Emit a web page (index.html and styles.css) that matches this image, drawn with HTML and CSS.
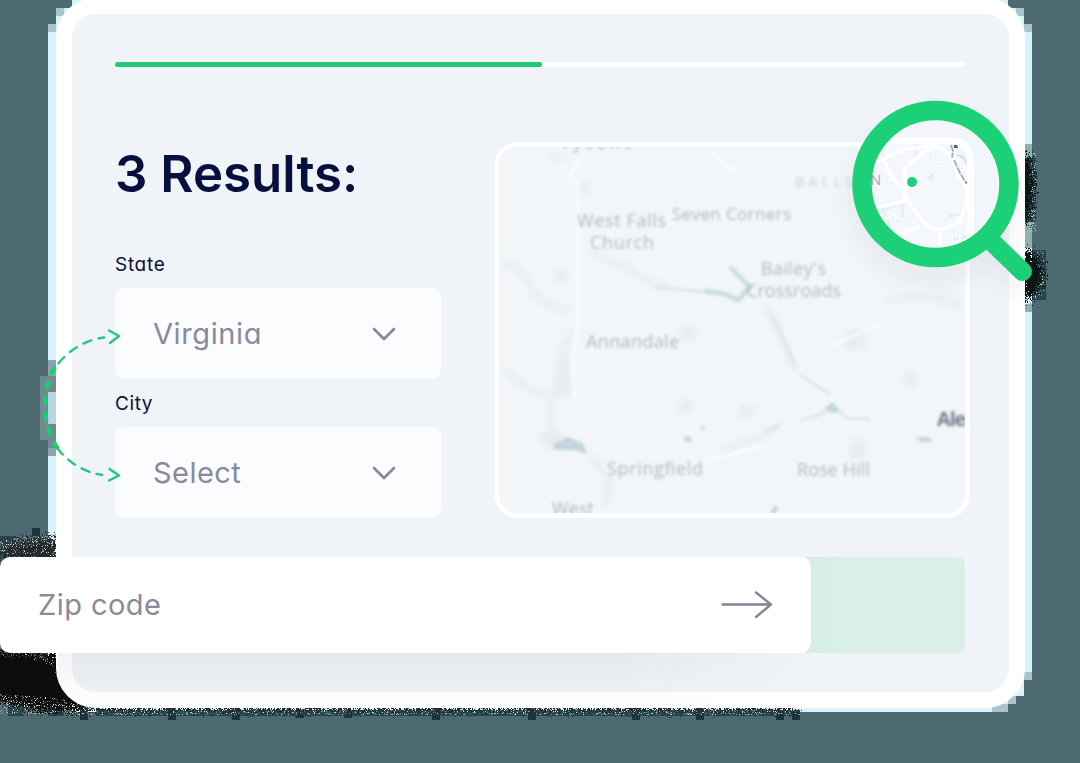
FILE: index.html
```html
<!DOCTYPE html>
<html lang="en">
<head>
<meta charset="utf-8">
<title>Results</title>
<link rel="stylesheet" href="styles.css">
</head>
<body>
<svg class="backdrop" viewBox="0 0 1080 763" aria-hidden="true">
  <defs>
    <filter id="grain" x="-20%" y="-20%" width="140%" height="140%">
      <feTurbulence type="fractalNoise" baseFrequency=".8" numOctaves="2" seed="4"/>
      <feDisplacementMap in="SourceGraphic" scale="26" xChannelSelector="R" yChannelSelector="G"/>
    </filter>
    <filter id="speckle" x="0" y="0" width="100%" height="100%">
      <feTurbulence type="fractalNoise" baseFrequency=".9" numOctaves="2" seed="9"/>
      <feColorMatrix values="0 0 0 0 .68  0 0 0 0 .74  0 0 0 0 .70  9 0 0 0 -5.400"/>
      <feComposite in2="SourceGraphic" operator="in"/>
    </filter>
  </defs>
  <path fill="#d7f3fd" d="M48 32h8V16h8V8h8V0h936v8h8v8h8v16h8v648h-8v16h-8v8h-8v8H72v-16H56v-20h-8z"/>
  <path fill="#a9c4cd" d="M48 24h8v8h-8zM56 8h8v8h-8zM1024 24h8v8h-8zM1016 8h8v8h-8zM1024 672h8v8h-8zM1008 696h8v8h-8zM992 704h16v8h-16z"/>
  <path fill="#8ba3ab" d="M48 360h8v96h-8z"/>
  <path fill="#6f8a91" d="M40 376h8v64h-8zM48 376h8v16h-8zM48 424h8v24h-8z"/>
  <path fill="#b9d5df" d="M48 392h8v32h-8z"/>
  <path fill="#264650" d="M0 536h16v8H0zM8 704h16v12H8zM48 704h16v12H48zM96 710h704v6H96zM1024 158h12v64h-12zM1032 250h14v50h-14z"/>
  <path fill="#8fb0b5" d="M1024 144h8v14h-8zM1024 222h8v26h-8zM1024 304h8v8h-8z"/>
  <path fill="#1d343c" d="M32 528h8v8h-8zM80 704h8v16h-8zM168 704h8v16h-8zM232 704h8v16h-8zM296 710h8v8h-8zM344 710h8v8h-8zM432 704h8v16h-8zM528 704h8v16h-8zM632 704h8v16h-8zM696 704h8v16h-8zM776 712h8v8h-8zM792 712h8v8h-8z"/>
  <g filter="url(#grain)">
    <path fill="#222c2d" d="M0 543 20 540 56 536V560H0z"/>
    <path fill="#0c1111" d="M-20 652H58V660L66 682 90 706V712H40L0 702H-20z"/>
    <path fill="#222a2b" d="M76 706H798V711H76z"/>
    <path fill="#0d1212" d="M1020 150Q1036 160 1034 190T1020 230z"/>
    <path fill="#0d1212" d="M1020 248Q1044 256 1044 275T1020 303z"/>
  </g>
  <g filter="url(#speckle)">
    <path d="M0 540 56 534V554H0zM0 694 60 698 84 708V714H0zM22 654h32v12l-20-6zM78 707H800V715H78zM1030 152h6v80h-8zM1036 250h8v44l-18 12 14-24z"/>
  </g>
</svg>

<main class="panel">
  <div class="progress"><div class="progress-fill"></div></div>
  <div class="columns">
    <section class="filters">
      <h1 class="title">3 Results:</h1>
      <div class="label label-state">State</div>
      <div class="select">
        <span class="value value-state">Virginia</span>
        <svg class="chevron" viewBox="0 0 24 14"><path d="M2 2 12 12 22 2"/></svg>
      </div>
      <div class="label label-city">City</div>
      <div class="select">
        <span class="value value-city">Select</span>
        <svg class="chevron" viewBox="0 0 24 14"><path d="M2 2 12 12 22 2"/></svg>
      </div>
    </section>
    <svg class="map" viewBox="495 142 475 376">
      <defs>
        <filter id="soft" x="-10%" y="-10%" width="120%" height="120%"><feGaussianBlur stdDeviation="1.400"/></filter>
        <filter id="haze" x="-20%" y="-20%" width="140%" height="140%"><feGaussianBlur stdDeviation="3.500"/></filter>
        <clipPath id="mapClip"><rect x="499" y="147" width="466" height="366" rx="17"/></clipPath>
      </defs>
      <rect x="497" y="144.500" width="470.500" height="371" rx="20" fill="#f2f6f9" stroke="#fff" stroke-width="4.500"/>
      <g clip-path="url(#mapClip)">
        <g class="terrain" filter="url(#haze)">
          <path d="M500 262 520 268 532 290 550 306 572 310M590 254 625 266 645 280 670 288M574 330 562 352 556 390 549 412 552 438M505 370 530 390 550 396M590 456 610 480 606 505M765 305 778 330 795 370M720 452 760 437 780 425M885 300 930 297 964 306"/>
          <path class="fill" d="M566 345 574 395H555zM680 326h16v14h-16zM536 435l20-6 10 10-16 12zM575 185l18-5 -8 16zM845 330h20v20h-20zM740 405h14v12h-14zM905 370h10v18h-10zM680 400h12v14h-12zM555 270h12v12h-12zM570 160h-20v-8zM850 440h16v20h-16z"/>
        </g>
        <g class="creeks" filter="url(#soft)">
          <path d="M772 315 782 336 795 366M800 375 830 394M765 432 780 425M800 420 815 416 830 410M836 408 846 418 870 419M655 287 704 292"/>
        </g>
        <g class="roads" filter="url(#soft)">
          <path d="M578 325V185L570 175 588 148M710 152 735 172M575 398Q570 360 578 325M700 463 760 446M880 324 830 346" stroke-width="3"/>
          <path d="M578 398Q600 440 660 458M830 346 790 378 700 425 680 440M790 430 870 422 964 446" stroke-width="2" opacity=".5"/>
        </g>
        <g class="water" filter="url(#soft)">
          <path d="M704 291 725 294 738 300 750 287 740 277 730 267" stroke-width="5"/>
          <path class="pond" d="M553 444 568 437 583 443 587 454 575 450 555 450zM824 408 833 402 840 412 832 413zM683 437l7 -1 2 6h-6zM700 425l5 2-3 4zM915 437l14 0 4 5-12 0z"/>
          <path fill="#c9ced3" stroke="none" d="M770 513l5-8 3 2-3 8z"/>
        </g>
        <g class="places" filter="url(#soft)">
          <text x="560" y="149" textLength="72">Tysons</text>
          <text x="577" y="227" textLength="89">West Falls</text>
          <text x="590" y="249" textLength="64">Church</text>
          <text x="672" y="220" textLength="119" font-size="17">Seven Corners</text>
          <text class="faint" x="795" y="187" textLength="58">BALLS</text>
          <text x="761" y="275" textLength="65">Bailey's</text>
          <text x="746" y="297" textLength="95">Crossroads</text>
          <text x="586" y="348" textLength="93">Annandale</text>
          <text x="607" y="475" textLength="96">Springfield</text>
          <text x="797" y="476" textLength="73">Rose Hill</text>
          <text x="552" y="515" textLength="42">West</text>
          <text class="city" x="937" y="426" textLength="98">Alexandria</text>
        </g>
      </g>
    </svg>
  </div>
  <div class="zip-row">
    <div class="zip">
      <span class="value value-zip">Zip code</span>
      <svg class="arrow" viewBox="0 0 52 28"><path d="M1.500 13.500H50M35 1.500 50 13.500 35 26"/></svg>
    </div>
    <div class="submit"></div>
  </div>
</main>

<svg class="link" viewBox="38 325 90 160" aria-hidden="true">
  <path d="M104 337.500C85 340 69 350 58 364" stroke-dasharray="8.500 7.500" stroke-dashoffset="3"/>
  <path d="M102 475C84 472 69 463 58 449" stroke-dasharray="8.500 7.500" stroke-dashoffset="3"/>
  <path d="M55 367C48 379 45 391 45 405S49 435 58 449" stroke="#17d070" stroke-width="4" stroke-linecap="butt" stroke-dasharray="9 6.500"/>
  <path d="M109 330.500 119 336 110 343M109.500 469 119 475.500 109 480.500"/>
</svg>

<svg class="lens" viewBox="832 80 220 240" aria-hidden="true">
  <defs>
    <clipPath id="lensClip"><circle cx="935" cy="184" r="66"/></clipPath>
    <clipPath id="zoomMap"><path d="M860 144H951Q967 144 967 162V260H860z"/></clipPath>
    <filter id="drop" x="-30%" y="-30%" width="160%" height="170%"><feGaussianBlur stdDeviation="12"/></filter>
    <clipPath id="onPanel"><path d="M832 80H1025V320H832z"/></clipPath>
  </defs>
  <g clip-path="url(#onPanel)">
    <g filter="url(#drop)" opacity=".07" fill="none" stroke="#27333b">
      <circle cx="935" cy="200" r="74" stroke-width="20"/>
      <path d="M990 250 1023 285" stroke-width="20" stroke-linecap="round"/>
    </g>
  </g>
  <g clip-path="url(#lensClip)">
    <path fill="#f2f5fa" d="M860 110h150v150H860z"/>
    <path fill="#fff" d="M860 137H948Q974 137 974 164V260H860z"/>
    <g clip-path="url(#zoomMap)">
      <path fill="#f4f7fb" d="M860 144H967V260H860z"/>
      <g fill="none" stroke="#e8edf1" stroke-width="2.600">
        <path d="M880 159 905 152 911 161 892 167M892 149 902 176M914 145 917 158M933 146V162H944M870 214 905 203M875 224 902 211M891 205 898 230M882 208 895 238M895 218 916 220M902 205 904 219M952 222V250M960 218V250M948 216 964 214M950 240 970 236M873 195 895 184M881 150 889 168"/>
      </g>
      <g fill="none" stroke="#fff">
        <path stroke-width="3.500" d="M867 166 905 149 940 145M903 170 925 151 940 147 952 158 958 176 969 192M885 168 903 190 908 202 928 227 940 230 965 220M905 168V200M865 210 907 201M885 240 920 227M940 231V255M966 185Q970 207 957 222M884 158 892 181"/>
        <path stroke-width="1.400" d="M880 159 905 152 911 161 892 167M892 149 902 176M933 146V162H944M875 224 902 211M891 205 898 230M895 218 916 220M952 222V250M960 218V250M873 195 895 184"/>
      </g>
      <path fill="#d5e1e4" d="M956 155Q965 151 968 166L963 159z"/>
      <path fill="none" stroke="#a6abb3" stroke-width="1.700" d="M951 145 953 151 952 158M954 160 959 171 966 183" stroke-dasharray="7 1"/>
      <path fill="#555b66" d="M954 145h3l1 3h-4zM965 182h2v2z"/>
      <path fill="#e7eaed" d="M926 178l7-5v8z"/>
      <text class="district" x="870.500" y="184.500">N</text>
    </g>
    <circle cx="912" cy="182" r="5" fill="#1bd077"/>
  </g>
  <g fill="none" stroke="#1bd077" stroke-linecap="round">
    <circle cx="935.500" cy="184" r="73.500" stroke-width="19.500"/>
    <path d="M990 240 1022.500 271.500" stroke-width="19"/>
  </g>
</svg>
</body>
</html>
```
FILE: styles.css
```css
* { box-sizing: border-box; }

body {
  margin: 0;
  width: 1080px;
  height: 763px;
  overflow: hidden;
  position: relative;
  background: #4d6a71;
  font-family: Inter, "Liberation Sans", sans-serif;
  font-feature-settings: "cv11";
}

.backdrop { position: absolute; inset: 0; width: 1080px; height: 763px; }

.panel {
  position: relative;
  z-index: 0;
  width: 969px;
  height: 710px;
  margin: -2px 0 0 56px;
  padding: 48px 44px 0 43px;
  border: 16px solid #fff;
  border-radius: 40px;
  background: #f0f4f8;
}

.progress { height: 5px; border-radius: 3px; background: #fff; }
.progress-fill { width: 427px; height: 5px; border-radius: 3px; background: #22c979; }

.columns {
  display: grid;
  grid-template-columns: 326px 475px;
  column-gap: 54px;
  margin: 75px -5px 0 0;
  height: 376px;
}

.title {
  margin: 0;
  height: 64px;
  line-height: 64px;
  font-size: 51px;
  font-weight: 600;
  color: #060f3d;
  white-space: nowrap;
}

.label { height: 26px; line-height: 26px; font-size: 19px; color: #0a1040; }
.label-state { margin-top: 46px; letter-spacing: .7px; }
.label-city { margin-top: 12px; letter-spacing: .6px; }

.select {
  display: flex;
  align-items: center;
  justify-content: space-between;
  height: 91px;
  margin-top: 10px;
  padding: 0 45px 0 38px;
  border-radius: 9px;
  background: #fafcfe;
}

.value { font-size: 29px; line-height: 40px; color: #8a8a9e; }
.value-state { letter-spacing: .6px; }
.value-city { letter-spacing: .45px; }
.value-zip { letter-spacing: .45px; }
.chevron { width: 24px; height: 14px; fill: none; stroke: #85879a; stroke-width: 2.6; stroke-linecap: round; stroke-linejoin: round; }

.map { display: block; width: 475px; height: 376px; }
.terrain { fill: none; stroke: #e3eaee; stroke-width: 5; }
.terrain .fill { fill: #e6ecf1; stroke: none; }
.creeks { fill: none; stroke: #dde6ea; stroke-width: 3; }
.roads { fill: none; stroke: #fafcfd; }
.water { fill: none; stroke: #cbdce3; }
.water .pond { fill: #c3d5de; stroke: none; }
.places { fill: #b3b7bc; font: 500 18px "Open Sans", sans-serif; }
.places .faint { fill: #ccd0d5; font-size: 14px; }
.places .city { fill: #777a8a; font-size: 20px; font-weight: 700; }
.district { fill: #9fa3a8; font: 14px "Open Sans", sans-serif; }

.zip-row { display: flex; margin: 39px 0 0 -115px; height: 96px; }
.zip {
  position: relative;
  display: flex;
  align-items: center;
  justify-content: space-between;
  width: 811px;
  height: 96px;
  padding: 0 38px;
  border-radius: 10px;
  background: #fff;
}
.zip::before {
  content: "";
  position: absolute;
  z-index: -1;
  left: 58px;
  right: 0;
  top: 96px;
  height: 54px;
  background: linear-gradient(rgba(50, 50, 45, .055), rgba(60, 65, 70, 0));
  mask-image: linear-gradient(90deg, #000 75%, transparent);
}
.arrow { width: 52px; height: 28px; fill: none; stroke: #85819b; stroke-width: 2.3; stroke-linecap: round; stroke-linejoin: round; }
.submit {
  position: relative;
  z-index: -1;
  width: 166px;
  margin-left: -12px;
  border-radius: 8px;
  background: linear-gradient(90deg, #d3eee2, #daf0e6 30%);
}

.link {
  position: absolute;
  z-index: 1;
  left: 38px;
  top: 325px;
  width: 90px;
  height: 160px;
  fill: none;
  stroke: #20c97c;
  stroke-width: 2.4;
  stroke-linecap: round;
  stroke-linejoin: round;
}
.lens { position: absolute; z-index: 2; left: 832px; top: 80px; width: 220px; height: 240px; }
```
